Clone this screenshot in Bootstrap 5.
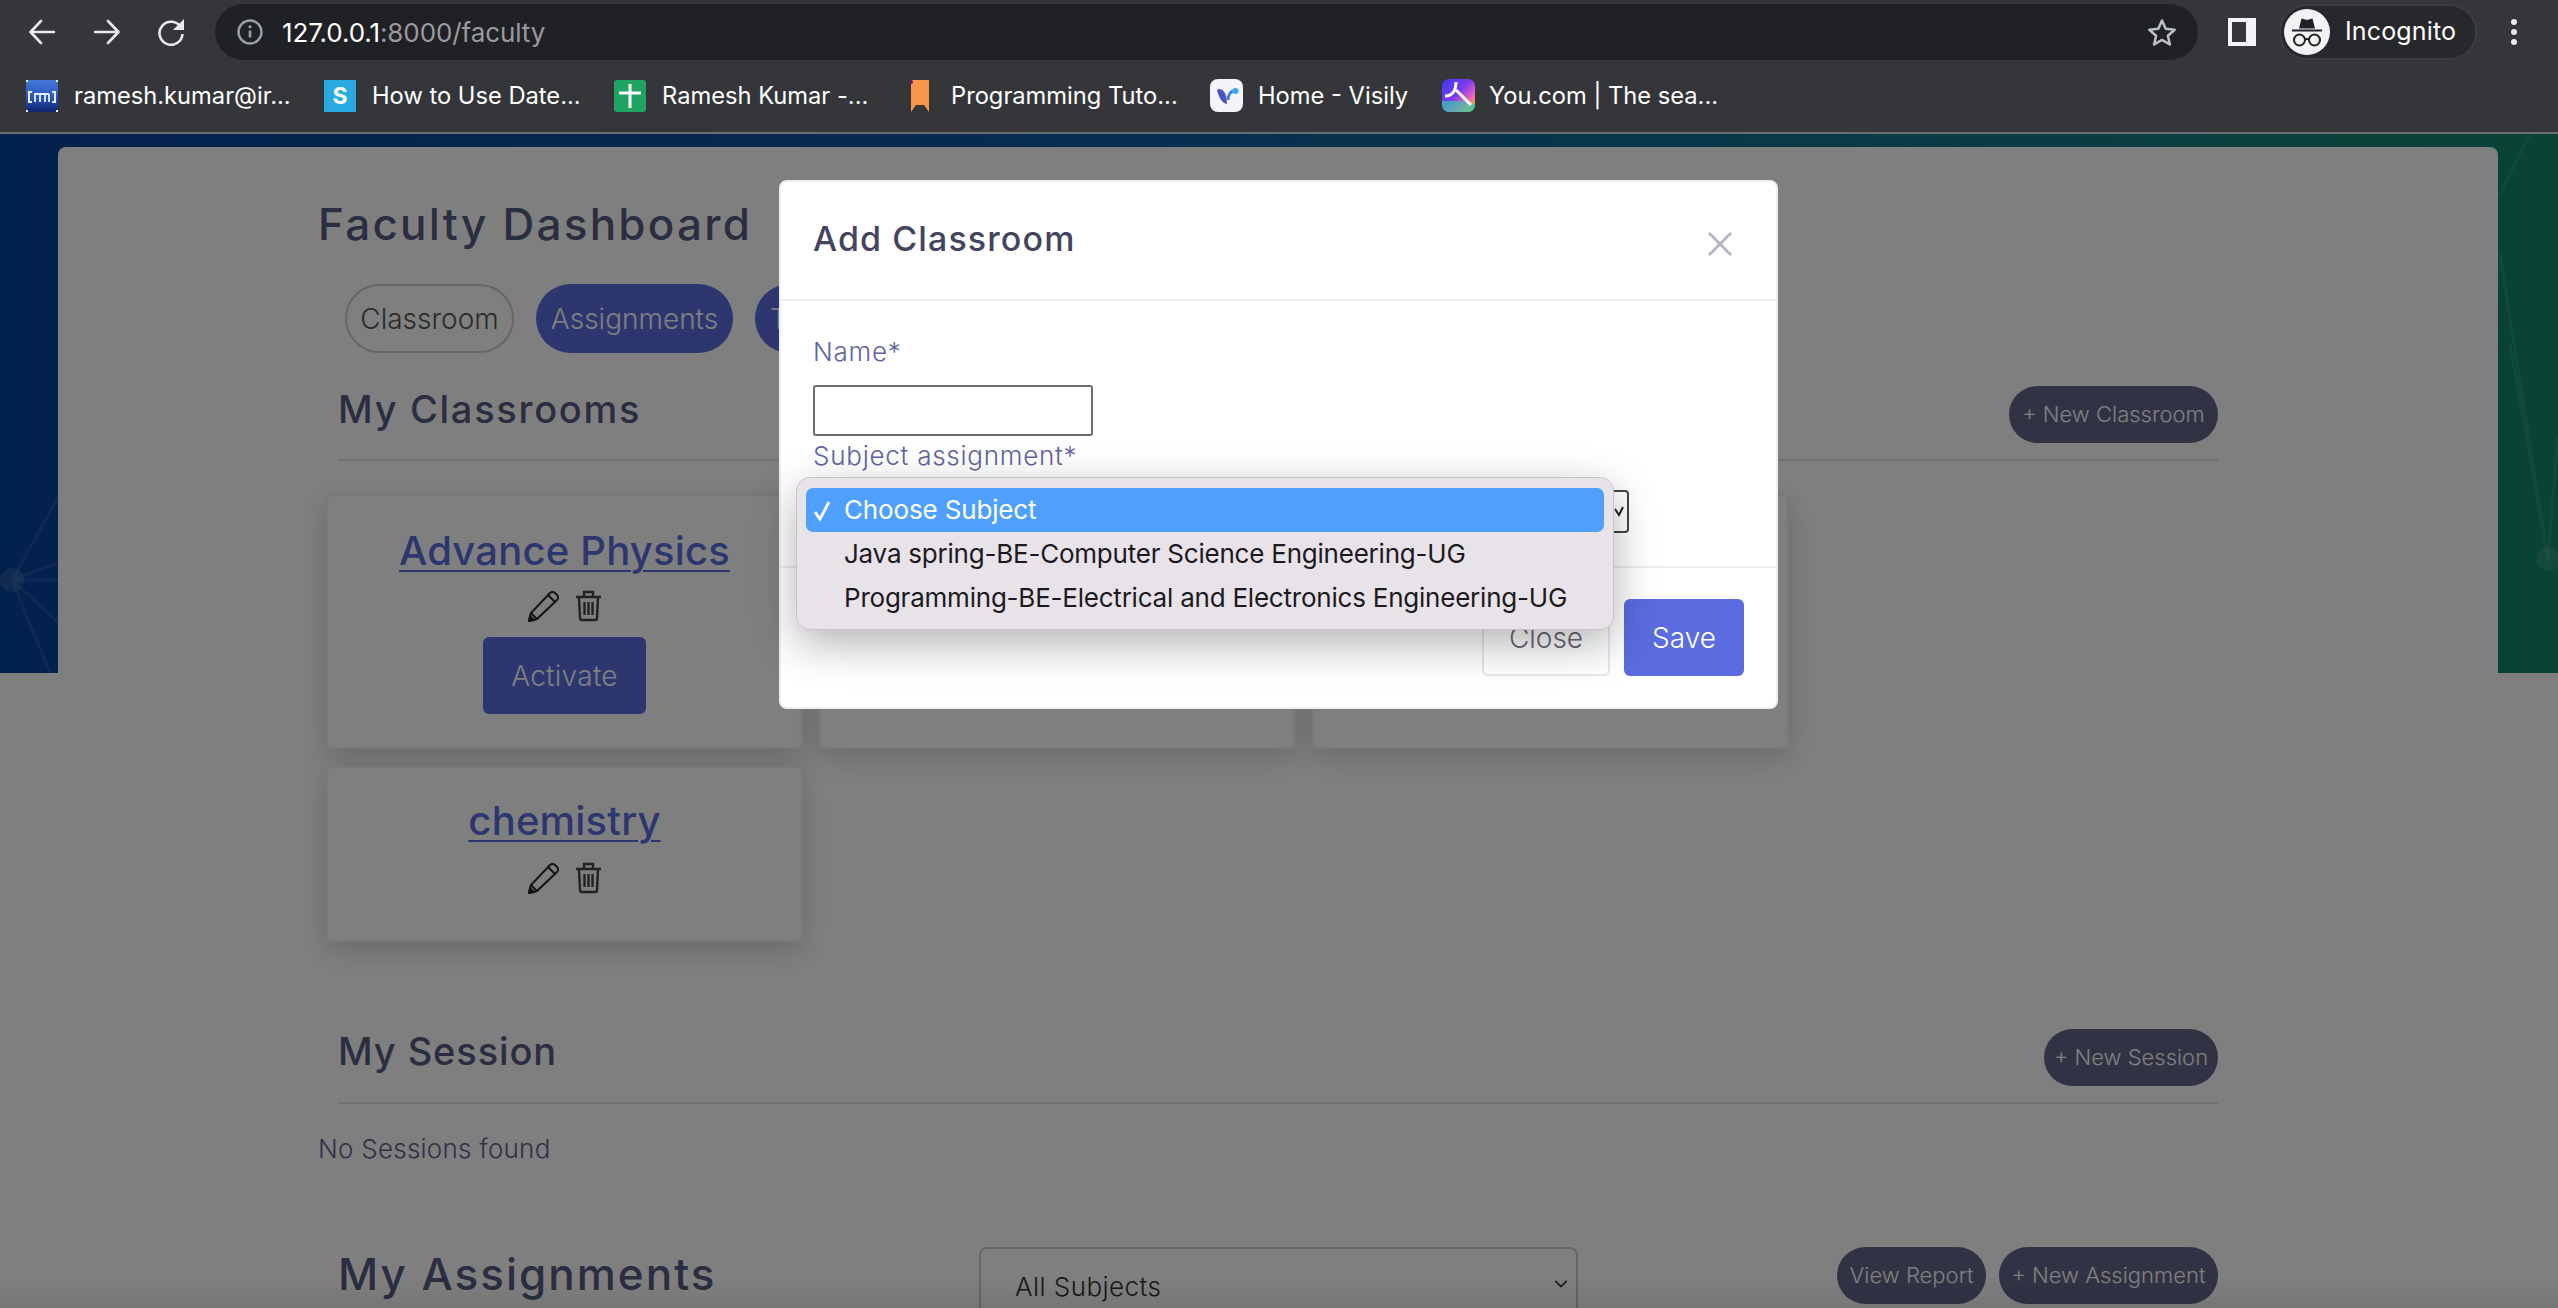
<!DOCTYPE html>
<html lang="en">
<head>
<meta charset="utf-8">
<title>Faculty Dashboard</title>
<link href="https://cdn.jsdelivr.net/npm/bootstrap@5.3.0/dist/css/bootstrap.min.css" rel="stylesheet">
<style>
html,body{height:1308px;overflow:hidden;background:#fff}
body{font-family:"Inter","Liberation Sans",sans-serif;position:relative}
/* browser chrome */
.chrome-frame{background:#35363a;height:134px;border-bottom:2px solid #6b6d70;color:#fff;font-family:"Inter","Liberation Sans",sans-serif}
.tool-row{height:64px;padding-left:29px;padding-right:35px}
.tool-btn{flex:0 0 auto;display:block}
.t-fwd{margin-left:39px}
.t-rel{margin-left:37px}
.t-side{margin-left:30px}
.t-dots{margin-left:33px}
.omni{background:#202124;height:56px;border-radius:28px;width:1983px;margin-left:30px;padding:0 21px 0 22px}
.omni-url{font-size:26px;color:#fff;letter-spacing:-.1px;margin-left:19px}
.omni-url span{color:#9a9b9e}
.incog-pill{width:198px;height:56px;border-radius:28px;background:#27282c;border:2px solid #3c3d42;padding-left:3px;font-size:25px;margin-left:23px}
.incog-pill b{font-weight:400;margin-left:15px;letter-spacing:.15px}
.mark-row{height:52px;padding-left:26px;margin-top:6px;font-size:23.7px;white-space:nowrap}
.mark-item{display:flex;align-items:center;gap:16px}
.mark-row svg{display:block;flex:0 0 auto}
.m1{width:298px}.m2{width:290px}.m3{width:295px}.m4{width:301px;gap:20px}.m5{width:232px;gap:15px}.m6{gap:14px}
/* page */
.page-wrap{position:relative;height:1174px;overflow:hidden;background:linear-gradient(90deg,#07429a 0%,#0e58a4 40%,#14788a 78%,#128768 100%) top left/100% 539px no-repeat #fff;padding-top:13px}
.band-art{position:absolute;top:0;left:0}
.main-panel{position:relative;margin:0 60px 0 58px;background:#fff;border-radius:8px 8px 0 0;padding:0 260px;height:1200px;color:#565a82}
.dash-title{font-size:44px;font-weight:500;letter-spacing:2.25px;margin:0;padding-top:40px;height:137px;line-height:75px;color:#565a82}
.pill-tab{height:69px;border-radius:35px;font-size:28px;font-weight:300;padding:0 15px;display:flex;align-items:center;justify-content:center;--bs-btn-font-size:28px}
.tab-row{margin-left:27px;gap:22px;height:69px}
.tab-plain{width:169px;color:#555;border:2px solid #ccc;background:#fff}
.tab-blue{width:197px;color:#fff;background:#5a6cdf;border:0}
.tab-blue2{width:100px;color:#fff;background:#5a6cdf;border:0;justify-content:flex-start}
.sect-head{margin:0 20px;border-bottom:2px solid #e4e4e4}
.sect-title{margin:0;font-weight:500;color:#565a82;font-size:38px}
.head-one{height:108px;padding-top:33px}
.head-one .sect-title{line-height:46px;letter-spacing:1.7px}
.head-two{margin-top:87px;height:75px}
.head-two .sect-title{line-height:44px;letter-spacing:.9px}
.round-action{height:57px;border-radius:29px;background:#62678a;color:#fff;border:0;font-size:22px;font-weight:300;padding:0;white-space:nowrap}
.w-cr{width:209px}.w-se{width:174px}.w-vr{width:149px}.w-as{width:219px}
.tile-grid{display:grid;grid-template-columns:repeat(3,477px);grid-template-rows:255px 176px;gap:17px 16px;margin:33px 0 0 8px}
.tile{border:2px solid #f2f2f2;border-radius:6px;box-shadow:0 8px 28px rgba(0,0,0,.18);background:#fff;text-align:center;align-items:center;padding-top:31px}
.tile-low{padding-top:29px}
.tile-low .tile-icons{margin-top:17px}
.tile-name{font-size:40px;font-weight:500;line-height:48px;color:#5a6cdf;letter-spacing:.2px;text-decoration:underline;text-underline-offset:5px;text-decoration-thickness:2px}
.tile-icons{gap:15px;margin-top:15px;height:32px}
.act-btn{width:163px;height:77px;background:#5a6cdf;color:#fff;border:0;font-size:28px;font-weight:300;margin-top:15px;border-radius:6px;letter-spacing:.3px}
.none-msg{font-size:26px;font-weight:300;margin:25px 0 0;color:#5e628c;line-height:40px;letter-spacing:.25px}
.assign-row{margin:78px 20px 0}
.assign-row .sect-title{font-size:44px;line-height:54px;width:641px;flex:0 0 auto;letter-spacing:2px}
.assign-btns{gap:13px}
/* modal */
.backdrop-dim{position:absolute;left:0;right:0;top:134px;bottom:0;background:#000;opacity:.5}
.bottom-fade{position:absolute;left:0;right:0;bottom:0;height:30px;background:linear-gradient(180deg,rgba(0,0,0,0),rgba(0,0,0,.07))}
.modal-spot{position:absolute;left:779px;top:180px;width:999px;height:529px}
.modal-spot .modal-content{height:100%;background:#fff;border:2px solid #eeeef4;border-radius:8px;font-family:inherit}
.modal-spot .modal-header{height:119px;padding:0 32px;border-bottom:2px solid #ecebf3;align-items:flex-start;flex:0 0 auto}
.mod-title{font-size:34px;font-weight:500;color:#444461;margin:40px 0 0;line-height:1;letter-spacing:1.1px}
.x-glyph{margin:50px 12px 0 0;display:block}
.modal-spot .modal-body{padding:38px 32px 0;height:265px;flex:0 0 auto}
.fld-label{font-size:26px;font-weight:300;color:#5f63a0;display:block;margin:0;line-height:26px;letter-spacing:.75px}
.name-box{display:block;width:280px;height:51px;border:2px solid #6e6e6e;border-radius:3px;margin:20px 0 7px;padding:0;background:#fff}
.sub-box{display:block;width:816px;height:43px;border:2px solid #444;border-radius:4px;margin-top:21px;padding:0;background:#fff;position:relative}
.sub-chev{position:absolute;right:3px;top:13px}
.modal-spot .modal-footer{border-top:2px solid #ecebf3;padding:31px 32px 0 0;justify-content:flex-end;align-items:flex-start;gap:14px;flex-wrap:nowrap}
.modal-spot .modal-footer>*{margin:0}
.btn-cls{width:128px;height:77px;background:#fff;color:#6a6a76;border:2px solid #e6e6ee;font-size:28px;font-weight:300;border-radius:6px;padding:0}
.btn-sv{width:120px;height:77px;background:#5a6cdf;color:#fff;border:0;font-size:28px;font-weight:300;border-radius:6px;padding:0}
.os-popup{position:absolute;left:796px;top:477px;width:818px;height:153px;background:#e8e3e9;border:1px solid #c7c3c9;border-radius:14px;box-shadow:0 14px 44px rgba(0,0,0,.3);padding:10px 9px;font-size:26px;color:#1c1a20;line-height:44px;font-family:"Inter","Liberation Sans",sans-serif}
.os-opt{height:44px;padding-left:38px;position:relative;white-space:nowrap;letter-spacing:-.22px;border-radius:7px}
.os-opt.os-on{background:#4f9fff;color:#fff;letter-spacing:-.15px}
.os-tick{position:absolute;left:7px;top:0}
.all-select{width:599px;height:90px;border:2px solid #ccc;border-radius:8px;font-size:26px;font-weight:300;color:#333;background-color:#fff;padding:0 0 12px 34px;margin:0;background-position:right 6px top 28px;background-size:18px 14px;letter-spacing:.45px;flex:0 0 auto}
</style>
</head>
<body>
<header class="chrome-frame">
  <div class="tool-row d-flex align-items-center">
    <svg class="tool-btn" width="26" height="26" viewBox="0 0 26 26" fill="none" stroke="#e8eaed" stroke-width="2.6" stroke-linecap="round" stroke-linejoin="round"><path d="M25 13H2M12 2 1.500 13 12 24"/></svg>
    <svg class="tool-btn t-fwd" width="26" height="26" viewBox="0 0 26 26" fill="none" stroke="#e8eaed" stroke-width="2.6" stroke-linecap="round" stroke-linejoin="round"><path d="M1 13h23M14 2l10.500 11L14 24"/></svg>
    <svg class="tool-btn t-rel" width="28" height="28" viewBox="0 0 28 28" fill="none"><path d="M24 9.500A11.500 11.500 0 1 0 25.500 16" stroke="#e8eaed" stroke-width="2.6"/><path d="M27 1v11H16z" fill="#e8eaed"/></svg>
    <div class="omni d-flex align-items-center">
      <svg width="26" height="26" viewBox="0 0 26 26" fill="none"><circle cx="13" cy="13" r="11.500" stroke="#9aa0a6" stroke-width="2.400"/><path d="M13 11.500v7" stroke="#9aa0a6" stroke-width="2.600"/><circle cx="13" cy="7.800" r="1.600" fill="#9aa0a6"/></svg>
      <div class="omni-url">127.0.0.1<span>:8000/faculty</span></div>
      <svg class="ms-auto" width="30" height="29" viewBox="0 0 30 29" fill="none"><path d="M15 2.500l3.700 8.300 9 .9-6.800 6 2 8.800-7.900-4.600-7.900 4.600 2-8.800-6.800-6 9-.9z" stroke="#bdc1c6" stroke-width="2.500" stroke-linejoin="round"/></svg>
    </div>
    <svg class="tool-btn t-side" width="28" height="28" viewBox="0 0 28 28"><path fill-rule="evenodd" d="M0 0h28v28H0zM4 4v20h14V4z" fill="#f1f3f4"/></svg>
    <div class="incog-pill d-flex align-items-center">
      <svg width="46" height="46" viewBox="0 0 46 46"><circle cx="23" cy="23" r="23" fill="#f1f3f4"/><path d="M15 19.500 17.500 9.500 23 11l5.500-1.500 2.500 10z" fill="#202124"/><path d="M8 21.500h30" stroke="#202124" stroke-width="2"/><circle cx="15.500" cy="31" r="5.500" fill="none" stroke="#202124" stroke-width="2"/><circle cx="30.500" cy="31" r="5.500" fill="none" stroke="#202124" stroke-width="2"/><path d="M21 30.500q2-1.200 4 0" stroke="#202124" stroke-width="2" fill="none"/></svg>
      <b>Incognito</b>
    </div>
    <svg class="tool-btn t-dots" width="8" height="28" viewBox="0 0 8 28"><circle cx="4" cy="4" r="3" fill="#e8eaed"/><circle cx="4" cy="14" r="3" fill="#e8eaed"/><circle cx="4" cy="24" r="3" fill="#e8eaed"/></svg>
  </div>
  <div class="mark-row d-flex align-items-center">
    <div class="mark-item m1">
      <svg width="32" height="32" viewBox="0 0 32 32"><defs><linearGradient id="irm" x1="0" y1="0" x2="0" y2="1"><stop offset="0" stop-color="#4577d8"/><stop offset=".55" stop-color="#2a55bb"/><stop offset="1" stop-color="#10226e"/></linearGradient></defs><rect width="32" height="32" fill="url(#irm)"/><path d="M6 12H3v10h3M26 12h3v10h-3" stroke="#e9edf6" stroke-width="2" fill="none"/><path d="M9 22v-8h3M14 22v-8h3M19 14v8M23 14v8M9 14h14" stroke="#e9edf6" stroke-width="1.800" fill="none"/><path d="M0 0h2v2H0zM30 0h2v2h-2zM0 30h2v2H0zM30 30h2v2h-2z" fill="#eef"/></svg>
      <span>ramesh.kumar@ir...</span>
    </div>
    <div class="mark-item m2">
      <svg width="32" height="32" viewBox="0 0 32 32"><rect width="32" height="32" fill="#29abe2"/><text x="16" y="24" text-anchor="middle" font-family="Inter,sans-serif" font-size="23" font-weight="700" fill="#fff">S</text></svg>
      <span>How to Use Date...</span>
    </div>
    <div class="mark-item m3">
      <svg width="32" height="32" viewBox="0 0 32 32"><rect width="32" height="32" rx="3" fill="#1fa463"/><path d="M16 4v24M5 13h22" stroke="#fff" stroke-width="3"/></svg>
      <span>Ramesh Kumar -...</span>
    </div>
    <div class="mark-item m4">
      <svg width="22" height="32" viewBox="0 0 22 32"><path d="M2 0h18v32l-5-7h-8l-5 7z" fill="#f79548"/><path d="M7 25l4-9 4 9z" fill="#f79548"/><circle cx="2" cy="2" r="2" fill="#5a1f58"/></svg>
      <span>Programming Tuto...</span>
    </div>
    <div class="mark-item m5">
      <svg width="33" height="33" viewBox="0 0 33 33"><rect width="33" height="33" rx="8" fill="#f4f5fb"/><path d="M7 11c4-3 8 2 9 6l1 8c-5 0-9-9-10-14z" fill="#4f52c4"/><path d="M18 21c0-4 2-8 5-9" stroke="#3d7fe0" stroke-width="3" fill="none"/><circle cx="25.500" cy="12" r="3" fill="#3aa4ef"/></svg>
      <span>Home - Visily</span>
    </div>
    <div class="mark-item m6">
      <svg width="33" height="33" viewBox="0 0 33 33"><defs><linearGradient id="youg" x1="0" y1="0" x2="1" y2="1"><stop offset="0" stop-color="#3c3cf0"/><stop offset=".45" stop-color="#7a3cf0"/><stop offset=".7" stop-color="#e860c0"/><stop offset=".85" stop-color="#f0a050"/><stop offset="1" stop-color="#40d0a0"/></linearGradient></defs><rect width="33" height="33" rx="7" fill="url(#youg)"/><path d="M0 22h20l13 3v1a7 7 0 0 1-7 7H7a7 7 0 0 1-7-7z" fill="#2fc9a8" opacity=".7"/><path d="M3 17c7 0 11-5 11-14M14 11l15 15" stroke="#fff" stroke-width="3" fill="none"/></svg>
      <span>You.com | The sea...</span>
    </div>
  </div>
</header>

<main class="page-wrap">
  <svg class="band-art" width="2558" height="539" viewBox="0 0 2558 539" fill="none" stroke="#fff" stroke-opacity=".09" stroke-width="3">
    <circle cx="12" cy="446" r="12" fill="#fff" fill-opacity=".1" stroke="none"/>
    <path d="M12 446 60 360M12 446 60 428M12 446H60M12 446 60 490M12 446 50 539"/>
    <circle cx="2548" cy="425" r="12" fill="#fff" fill-opacity=".1" stroke="none"/>
    <path d="M2548 425 2500 120M2548 425 2510 210M2548 425 2558 300M2500 60 2530 0"/>
  </svg>
  <div class="main-panel">
    <h1 class="dash-title">Faculty Dashboard</h1>
    <div class="tab-row d-flex">
      <button class="btn pill-tab tab-plain" type="button">Classroom</button>
      <button class="btn pill-tab tab-blue" type="button">Assignments</button>
      <button class="btn pill-tab tab-blue2" type="button">Tests</button>
    </div>

    <section class="sect-head head-one d-flex justify-content-between align-items-start">
      <h2 class="sect-title">My Classrooms</h2>
      <button class="btn round-action w-cr" type="button">+ New Classroom</button>
    </section>
    <div class="tile-grid">
      <div class="card tile">
        <a class="tile-name" href="#">Advance Physics</a>
        <div class="tile-icons d-flex"><svg width="32" height="32" viewBox="0 0 32 32" fill="none" stroke="#2a2a2a" stroke-width="2"><path d="M1 31l2-8L22 3a3.500 3.500 0 0 1 5 0l2 2a3.500 3.500 0 0 1 0 5L9 29z"/><path d="M3 23l6 6M20 5l7 7"/><path d="M1 31l1-5 4 4z" fill="#111"/></svg><svg width="27" height="32" viewBox="0 0 27 32" fill="none" stroke="#444" stroke-width="2.400"><path d="M1 7h25M9 6V2h9v4M4 7l1 21q0 2 2 2h13q2 0 2-2l1-21M9.500 12v13M13.500 12v13M17.500 12v13"/></svg></div>
        <button class="btn act-btn" type="button">Activate</button>
      </div>
      <div class="card tile"></div>
      <div class="card tile"></div>
      <div class="card tile tile-low">
        <a class="tile-name" href="#">chemistry</a>
        <div class="tile-icons d-flex"><svg width="32" height="32" viewBox="0 0 32 32" fill="none" stroke="#2a2a2a" stroke-width="2"><path d="M1 31l2-8L22 3a3.500 3.500 0 0 1 5 0l2 2a3.500 3.500 0 0 1 0 5L9 29z"/><path d="M3 23l6 6M20 5l7 7"/><path d="M1 31l1-5 4 4z" fill="#111"/></svg><svg width="27" height="32" viewBox="0 0 27 32" fill="none" stroke="#444" stroke-width="2.400"><path d="M1 7h25M9 6V2h9v4M4 7l1 21q0 2 2 2h13q2 0 2-2l1-21M9.500 12v13M13.500 12v13M17.500 12v13"/></svg></div>
      </div>
    </div>

    <section class="sect-head head-two d-flex justify-content-between align-items-start">
      <h2 class="sect-title">My Session</h2>
      <button class="btn round-action w-se" type="button">+ New Session</button>
    </section>
    <p class="none-msg">No Sessions found</p>

    <section class="assign-row d-flex align-items-start">
      <h2 class="sect-title">My Assignments</h2>
      <select class="all-select form-select" aria-label="All Subjects"><option>All Subjects</option></select>
      <div class="ms-auto d-flex assign-btns">
        <button class="btn round-action w-vr" type="button">View Report</button>
        <button class="btn round-action w-as" type="button">+ New Assignment</button>
      </div>
    </section>
  </div>
</main>

<div class="backdrop-dim"></div>
<div class="bottom-fade"></div>

<div class="modal-spot">
  <div class="modal-content">
    <div class="modal-header">
      <h5 class="mod-title">Add Classroom</h5>
      <svg class="x-glyph ms-auto" width="24" height="24" viewBox="0 0 24 24" fill="none" stroke="#b4b6c6" stroke-width="2.800"><path d="M1 1l22 22M23 1 1 23"/></svg>
    </div>
    <div class="modal-body">
      <label class="fld-label">Name*</label>
      <input class="name-box" type="text" aria-label="Name">
      <label class="fld-label">Subject assignment*</label>
      <div class="sub-box"><svg class="sub-chev" width="10" height="14" viewBox="0 0 10 14" fill="none" stroke="#222" stroke-width="2"><path d="M1 4l4 6 4-8"/></svg></div>
    </div>
    <div class="modal-footer">
      <button class="btn btn-cls" type="button">Close</button>
      <button class="btn btn-sv" type="button">Save</button>
    </div>
  </div>
</div>
<div class="os-popup">
  <div class="os-opt os-on"><svg class="os-tick" width="20" height="44" viewBox="0 0 20 44" fill="none" stroke="#fff" stroke-width="2.800"><path d="M2 24l5 7L16 14"/></svg>Choose Subject</div>
  <div class="os-opt">Java spring-BE-Computer Science Engineering-UG</div>
  <div class="os-opt">Programming-BE-Electrical and Electronics Engineering-UG</div>
</div>
</body>
</html>
